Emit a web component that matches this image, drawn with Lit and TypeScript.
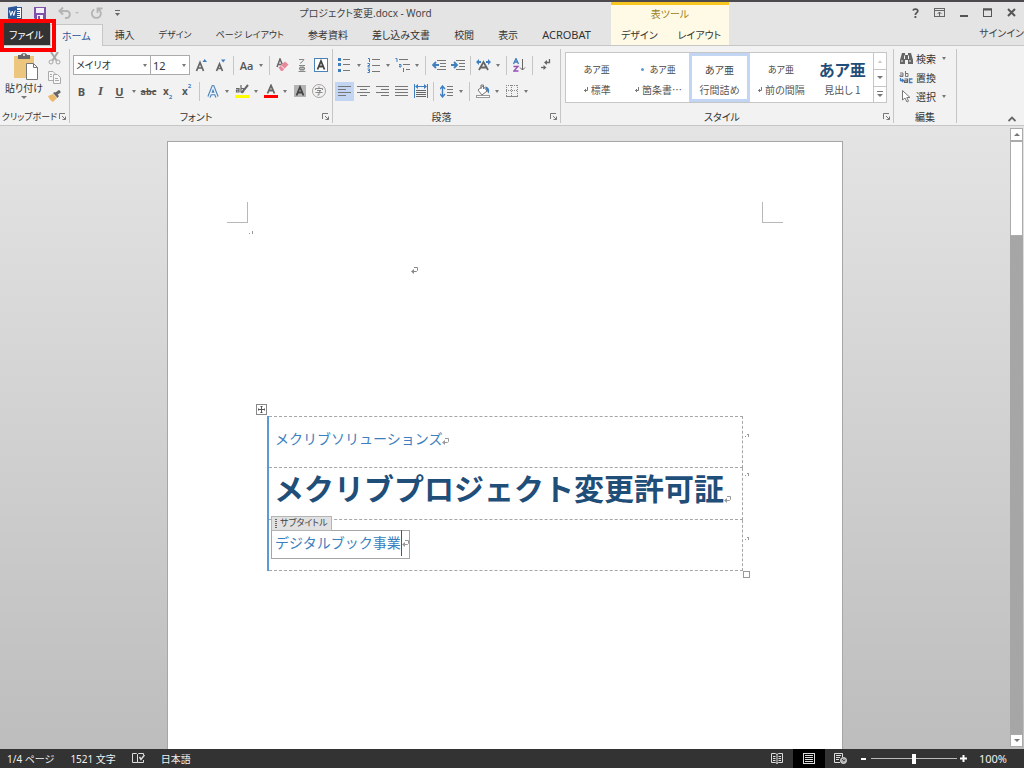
import { LitElement, html, css, svg, TemplateResult } from "lit";
import { customElement, property } from "lit/decorators.js";
import { classMap } from "lit/directives/class-map.js";

const icon = (w: number, h: number, body: unknown) =>
  html`<svg width=${w} height=${h} viewBox="0 0 ${w} ${h}" fill="none" aria-hidden="true">${body}</svg>`;

const lines = (rows: number[][], color = "#777") =>
  rows.map(([x1, x2, y]) => svg`<path d="M${x1} ${y}.5H${x2}" stroke=${color}/>`);

const ret = (color = "#666") => icon(7, 7, svg`<path d="M3 0.500H6.500V3.500L5.500 4.500H2" stroke=${color}/><path d="M0 4.500L3 2V7Z" fill=${color}/>`);

const ICONS: Record<string, () => TemplateResult> = {
  word: () => icon(14, 14, svg`
    <rect x="7.500" y="1.500" width="6" height="11" fill="#fff" stroke="#2b579a"/>
    <path d="M9 4.500H12M9 6.500H12M9 8.500H12M9 10.500H12" stroke="#2b579a"/>
    <path d="M0 1.500L9 0V14L0 12.500Z" fill="#2b579a"/>
    <path d="M1.500 4.500L2.800 9.500L4.300 5L5.800 9.500L7.200 4.500" stroke="#fff"/>`),
  save: () => icon(12, 12, svg`
    <path d="M0 0H12V12H1L0 11Z" fill="#8051a8"/><rect x="2" y="1" width="8" height="5" fill="#f4f0f8"/>
    <rect x="3" y="8" width="6" height="4" fill="#f4f0f8"/><rect x="4" y="9" width="2" height="3" fill="#8051a8"/>`),
  undo: () => icon(13, 12, svg`<path d="M1.500 4H8.500C13 4 13 11 8 11H7M5 0.500L1.500 4L5 7.500" stroke="#b4b4b4" stroke-width="2"/>`),
  redo: () => icon(12, 12, svg`<path d="M7.500 2.500A4.500 4.500 0 1 1 3.200 2.500M6.500 6V1.500H11.500" stroke="#b4b4b4" stroke-width="1.800"/>`),
  more: () => icon(5, 6, svg`<path d="M0 0.500H5" stroke="#666"/><path d="M0 3H5L2.500 6Z" fill="#666"/>`),
  help: () => icon(7, 10, svg`<path d="M1 2.500C1.500 0.500 6 0.500 5.800 3C5.600 4.800 3.400 4.500 3.400 7M3.400 8V10" stroke="#555" stroke-width="1.800"/>`),
  ribbonOpts: () => icon(11, 9, svg`<rect x="0.500" y="0.500" width="10" height="8" stroke="#666"/><path d="M1 2.500H10M5.500 8V4M3.500 6L5.500 4L7.500 6" stroke="#666"/>`),
  min: () => icon(8, 9, svg`<path d="M0 8H8" stroke="#555" stroke-width="2"/>`),
  max: () => icon(9, 9, svg`<rect x="0.500" y="1" width="8" height="7.500" stroke="#555"/><path d="M0 1.500H9" stroke="#555" stroke-width="2"/>`),
  close: () => icon(9, 9, svg`<path d="M1 1L8 8M8 1L1 8" stroke="#555" stroke-width="2"/>`),
  paste: () => icon(26, 27, svg`
    <rect x="1" y="3" width="20" height="22" fill="#ecc67c"/>
    <path d="M5 2H8C8 -0.500 14 -0.500 14 2H17V6H5Z" fill="#666"/><circle cx="11" cy="2" r="1" fill="#f2f2f2"/>
    <path d="M13.500 10.500H20.500L24.500 14.500V26.500H13.500Z" fill="#fff" stroke="#777"/><path d="M20.500 10.500V14.500H24.500" stroke="#777"/>`),
  cut: () => icon(13, 13, svg`<path d="M3 0L8.500 8.500M10 0L4.500 8.500" stroke="#a8a8a8" stroke-width="2"/><circle cx="3" cy="10" r="2" stroke="#a8a8a8"/><circle cx="10" cy="10" r="2" stroke="#a8a8a8"/>`),
  copy: () => icon(13, 13, svg`<path d="M0.500 0.500H5L7.500 3V9.500H0.500Z" fill="#f6f6f6" stroke="#aaa"/><path d="M5.500 3.500H9.500L12.500 6.500V12.500H5.500Z" fill="#f6f6f6" stroke="#aaa"/><path d="M2 3.500H4M2 5.500H4M7 7.500H10M7 9.500H11" stroke="#aaa"/>`),
  brush: () => icon(14, 13, svg`<path d="M0 6L5 4L9 8L5 12C3 11 1 9 0 6Z" fill="#ecb96c"/><path d="M5 3L7 2L11 6L9.500 8Z" fill="#666"/><path d="M8 4L12 1" stroke="#666" stroke-width="3"/>`),
  grow: () => icon(13, 13, svg`<path d="M1.500 12L5 3.500L8.500 12M3 9H7.500" stroke="#666" stroke-width="1.700"/><path d="M7.500 3L9.700 0L12 3Z" fill="#3f7fbf"/>`),
  shrink: () => icon(13, 13, svg`<path d="M2.500 12L5.500 5L8.500 12M3.500 9.500H7.500" stroke="#666" stroke-width="1.700"/><path d="M7 0.500H11.500L9.200 3.500Z" fill="#3f7fbf"/>`),
  erase: () => icon(14, 14, svg`<path d="M1 9L4 1L6.500 7M2 6.500H5" stroke="#666" stroke-width="1.500"/><path d="M2.500 9.500L9 3.500L12.500 6.500L6.500 13H5Z" fill="#e88a9c"/><path d="M5 7.500L8.500 11" stroke="#f5f5f5"/>`),
  ruby: () => icon(8, 13, svg`<path d="M1 0.500H6L4 3L2 4.500M1 6.500H7M1.500 8.500H6.500V10.500H1.500ZM3 6V12M5 6V12M0.500 12.500H7.500" stroke="#888"/>`),
  boxA: () => icon(14, 14, svg`<rect x="0.500" y="0.500" width="13" height="13" fill="#fff" stroke="#4a83b8"/><path d="M3.500 11.500L7 3L10.500 11.500M4.500 8.500H9.500" stroke="#444" stroke-width="1.800"/>`),
  effects: () => icon(12, 13, svg`<path d="M2 12L6 2L10 12M3.500 8.500H8.500" stroke="#4a83b8" stroke-width="3.500"/><path d="M2 12L6 2L10 12M3.500 8.500H8.500" stroke="#eef5fc" stroke-width="1.300"/>`),
  marker: () => icon(14, 14, svg`<path d="M1 4.500H4V8H1.500V6.200H4M6 1V8H8.500V4.500H6" stroke="#666" stroke-width="1.200"/><path d="M13 1L8 7L6.500 9" stroke="#666" stroke-width="2"/><rect y="11" width="14" height="3" fill="#ff0"/>`),
  color: () => icon(14, 14, svg`<path d="M3.500 9.500L7 1.500L10.500 9.500M4.500 6.500H9.500" stroke="#666" stroke-width="1.800"/><rect y="11" width="14" height="3" fill="#f00"/>`),
  shade: () => icon(12, 12, svg`<rect width="12" height="12" fill="#b4b4b4"/><path d="M2.500 10.500L6 2L9.500 10.500M3.500 7.500H8.500" stroke="#444" stroke-width="1.800"/>`),
  enclose: () => icon(14, 14, svg`<circle cx="7" cy="7" r="6.500" stroke="#aaa09c"/><path d="M7 2.500V4M3.500 6V4.500H10.500V6M5 6.500H9L7 8V11H5.500M3.500 8.500H10.500" stroke="#888"/>`),
  bullets: () => icon(13, 14, svg`<path d="M0 1.500H3M0 6.500H3M0 12.500H3" stroke="#3f7fbf" stroke-width="3"/>${lines([[5, 12, 1], [5, 12, 6], [5, 12, 12]])}`),
  numbers: () => icon(13, 15, svg`<path d="M1 0.500H2.500V4M0.500 5.500H2.500V7.500H1V9H3M0.500 11H2.500V14.500H0.500M1 12.500H2" stroke="#3f7fbf"/>${lines([[5, 13, 1], [5, 13, 7], [5, 13, 13]])}`),
  multi: () => icon(15, 14, svg`<path d="M0.500 0.500H2V4M4 6.500H6V9H4.500V7.500M8.500 10V14" stroke="#3f7fbf"/>${lines([[4, 13, 1], [8, 15, 6], [11, 15, 11]])}`),
  outdent: () => icon(14, 10, svg`${lines([[5, 14, 0], [8, 14, 3], [8, 14, 6], [5, 14, 9]])}<path d="M7 5H2M4 2L1 5L4 8" stroke="#3f7fbf" stroke-width="1.800"/>`),
  indent: () => icon(14, 10, svg`${lines([[5, 14, 0], [8, 14, 3], [8, 14, 6], [5, 14, 9]])}<path d="M0 5H5M3 2L6 5L3 8" stroke="#3f7fbf" stroke-width="1.800"/>`),
  scaleA: () => icon(15, 12, svg`<path d="M3 11L7.500 3L12 11M4.500 8.500H10.500" stroke="#666" stroke-width="1.800"/><path d="M0 3L3 0V2H5V4H3V6ZM15 3L12 0V2H10V4H12V6Z" fill="#3f7fbf"/>`),
  sort: () => icon(13, 14, svg`<path d="M0.500 6L3 0.500L5.500 6M1.500 4H4.500" stroke="#3f7fbf" stroke-width="1.300"/><path d="M0.500 8.500H5L0.800 13H5.500" stroke="#9650b4" stroke-width="1.300"/><path d="M9.500 1V12M7 9.500L9.500 12L12 9.500" stroke="#666"/>`),
  marks: () => icon(10, 12, svg`<path d="M8.500 0V3.500H4" stroke="#666" stroke-width="1.300"/><path d="M3 3.500L6 1V6Z" fill="#666"/><path d="M0 8.500H3" stroke="#666" stroke-width="1.300"/><path d="M5.500 8.500L2.500 6V11Z" fill="#666"/>`),
  left: () => icon(13, 10, lines([[0, 13, 0], [0, 8, 3], [0, 13, 6], [0, 8, 9]])),
  center: () => icon(13, 10, lines([[0, 13, 0], [3, 10, 3], [0, 13, 6], [3, 10, 9]])),
  right: () => icon(13, 10, lines([[0, 13, 0], [5, 13, 3], [0, 13, 6], [5, 13, 9]])),
  justify: () => icon(13, 10, lines([[0, 13, 0], [0, 13, 3], [0, 13, 6], [0, 13, 9]])),
  distribute: () => icon(14, 14, svg`<path d="M0.500 0V14M13.500 0V14" stroke="#3f7fbf"/><path d="M1 2.500L4 0V2H10V0L13 2.500L10 5V3H4V5Z" fill="#3f7fbf"/><path d="M2 6.500H12M2 8.500H12M2 10.500H12M2 12.500H12" stroke="#666"/>`),
  spacing: () => icon(13, 13, svg`<path d="M2.500 2V11M0 4L2.500 1L5 4M0 9L2.500 12L5 9" stroke="#3f7fbf" stroke-width="1.400"/>${lines([[7, 13, 1], [7, 13, 4], [7, 13, 7], [7, 13, 10]])}`),
  bucket: () => icon(14, 14, svg`<path d="M2 6L7 2L11 7L6 11Z" fill="#fff" stroke="#777"/><path d="M5 5V1H7.500V5" stroke="#777"/><path d="M9 2.500C13 3 14 6 12.500 9.500L10.500 6Z" fill="#3f7fbf"/><rect x="0.500" y="11.500" width="13" height="2" fill="#fff" stroke="#999"/>`),
  borders: () => icon(12, 12, svg`<path d="M0.500 0V12M11.500 0V12M0 0.500H12M5.500 0V12M0 5.500H12" stroke="#888" stroke-dasharray="1 1"/><path d="M0 11.500H12" stroke="#888"/>`),
  find: () => icon(13, 11, svg`<path d="M2 0H5V2H8V0H11L13 7V11H8V7H5V11H0V7Z" fill="#666"/><path d="M4.500 2.500V6M8.500 2.500V6M2 7V9M10 7V9" stroke="#f2f2f2"/>`),
  replace: () => icon(14, 14, svg`<path d="M1 2H4V5.500H1V4H4M6.500 0V5.500H9V2.500H6.500" stroke="#777"/><path d="M1.500 7V9.500H4M3 8L4.500 9.500L3 11M13.500 8H10.500V11.500H13.500" stroke="#3f7fbf" stroke-width="1.300"/><path d="M5.500 8H8.500V11.500H5.500V9.800H8.500" stroke="#666" stroke-width="1.200"/>`),
  select: () => icon(9, 13, svg`<path d="M0.500 0.500V10L3 8L5 12L6.500 11.200L4.800 7.500H8Z" fill="#fff" stroke="#777"/>`),
  proof: () => icon(13, 11, svg`<path d="M5.500 1.500V9.500H0.500V0.500H4.500L5.500 1.500L6.500 0.500H11.500V2M5.500 9.500H11.500V7" stroke="#ddd"/><path d="M7.500 4L9 6.500L12.500 2" stroke="#ddd" stroke-width="1.500"/>`),
  read: () => icon(12, 11, svg`<path d="M6 1.500V10.500M0.500 0.500H4.500L6 1.500L7.500 0.500H11.500V9.500H7.500L6 10.500L4.500 9.500H0.500Z" stroke="#ddd"/><path d="M2 3.500H4.500M2 5.500H4.500M2 7.500H4.500M7.500 3.500H10M7.500 5.500H10M7.500 7.500H10" stroke="#ddd"/>`),
  print: () => icon(12, 11, svg`<rect x="0.500" y="0.500" width="11" height="10" stroke="#ddd"/><path d="M2 2.500H10M2 4.500H10M2 6.500H10M2 8.500H10" stroke="#ddd"/>`),
  web: () => icon(13, 11, svg`<path d="M6 9.500H0.500V0.500H8.500V4M2 2.500H7M2 4.500H6M2 6.500H5" stroke="#ddd"/><circle cx="9.500" cy="7.500" r="3" fill="#aaa" stroke="#ddd"/><path d="M8 6L10 8L11 6.500" stroke="#444"/>`),
};

@customElement("ribbon-button")
class RibbonButton extends LitElement {
  @property() icon = "";
  @property() label = "";
  @property({ type: Boolean }) drop = false;
  @property({ type: Boolean }) on = false;
  static styles = css`
    :host { display: flex; flex: none; }
    button { all: unset; display: flex; align-items: center; height: 19px; }
    .face { width: 19px; height: 19px; display: flex; align-items: center; justify-content: center; color: #555; font: 11px "Open Sans", sans-serif; }
    .on { background: #c2d5f2; }
    .arrow { width: 10px; display: flex; justify-content: center; }
    .arrow::after { content: ""; border: 2px solid transparent; border-top: 3px solid #777; border-bottom: 0; }
    .b { font-weight: 700; }
    .i { font-style: italic; font-weight: 700; font-family: "Liberation Serif", serif; font-size: 13px; }
    .u { font-weight: 700; text-decoration: underline; }
    .s { font-size: 9px; font-weight: 700; text-decoration: line-through; }
    .case { font-size: 11px; font-weight: 600; }
    .x { font-size: 10px; font-weight: 700; }
    small { font-size: 6px; font-weight: 700; color: #3f7fbf; line-height: 8px; }
    .low { align-self: flex-end; }
    .high { align-self: flex-start; }
  `;
  private face() {
    switch (this.icon) {
      case "B": return html`<span class="b">B</span>`;
      case "I": return html`<span class="i">I</span>`;
      case "U": return html`<span class="u">U</span>`;
      case "abc": return html`<span class="s">abc</span>`;
      case "Aa": return html`<span class="case">Aa</span>`;
      case "sub": return html`<span class="x">x</span><small class="low">2</small>`;
      case "sup": return html`<span class="x">x</span><small class="high">2</small>`;
      default: return ICONS[this.icon]();
    }
  }
  render() {
    return html`<button aria-label=${this.label}>
      <span class=${classMap({ face: true, on: this.on })}>${this.face()}</span>
      ${this.drop ? html`<span class="arrow"></span>` : ""}
    </button>`;
  }
}

@customElement("ribbon-group")
class RibbonGroup extends LitElement {
  @property() label = "";
  @property({ type: Boolean }) launcher = false;
  static styles = css`
    :host { display: flex; flex-direction: column; flex: none; box-sizing: border-box; border-right: 1px solid #c6c6c6; margin: 3px 0; height: 74px; }
    .body { flex: 1; display: flex; }
    .foot { height: 12px; display: flex; align-items: center; }
    .name { flex: 1; text-align: center; line-height: 12px; white-space: nowrap; }
    button { all: unset; width: 10px; height: 8px; display: flex; }
  `;
  render() {
    return html`<div class="body"><slot></slot></div>
      <div class="foot"><span class="name">${this.label}</span>
      ${this.launcher ? html`<button aria-label="${this.label}の設定">${icon(8, 8, svg`<path d="M0.500 6V0.500H6M3 3L6.500 6.500M6.500 3.500V6.500H3.500" stroke="#777"/>`)}</button>` : ""}</div>`;
  }
}

type Tool = [string, string, boolean?, boolean?] | "|";
const FONT_TOP: Tool[] = [["grow", "フォントの拡大"], ["shrink", "フォントの縮小"], "|", ["Aa", "文字種の変換", true], "|", ["erase", "書式のクリア"], ["ruby", "ルビ"], ["boxA", "囲み線"]];
const FONT_LOW: Tool[] = [["B", "太字"], ["I", "斜体"], ["U", "下線", true], ["abc", "取り消し線"], ["sub", "下付き"], ["sup", "上付き"], "|", ["effects", "文字の効果", true], ["marker", "蛍光ペン", true], ["color", "フォントの色", true], ["shade", "網かけ"], ["enclose", "囲い文字"]];
const PARA_TOP: Tool[] = [["bullets", "箇条書き", true], ["numbers", "段落番号", true], ["multi", "アウトライン", true], "|", ["outdent", "インデントを減らす"], ["indent", "インデントを増やす"], "|", ["scaleA", "拡張書式", true], "|", ["sort", "並べ替え"], "|", ["marks", "編集記号"]];
const PARA_LOW: Tool[] = [["left", "左揃え", false, true], ["center", "中央揃え"], ["right", "右揃え"], ["justify", "両端揃え"], ["distribute", "均等割り付け"], "|", ["spacing", "行間", true], "|", ["bucket", "塗りつぶし", true], ["borders", "罫線", true]];

const TABS: [string, string][] = [["挿入", ""], ["デザイン", "kana"], ["ページ レイアウト", "kana"], ["参考資料", ""], ["差し込み文書", ""], ["校閲", ""], ["表示", ""], ["ACROBAT", "latin"]];
const STYLES = [
  { name: "標準", mark: true }, { name: "箇条書…", mark: true, dot: true }, { name: "行間詰め", on: true },
  { name: "前の間隔", mark: true }, { name: "見出し 1", head: true },
];

@customElement("app-root")
class AppRoot extends LitElement {
  static styles = css`
    :host { display: flex; flex-direction: column; height: 100vh; overflow: hidden; font-family: "Noto Sans", "Noto Sans CJK JP", sans-serif; font-size: 10px; color: #333; font-feature-settings: "palt"; }
    * { box-sizing: border-box; }
    button { all: unset; box-sizing: border-box; cursor: default; }
    svg { display: block; flex: none; }
    .header { flex: none; display: grid; grid-template-columns: 611px 118px 1fr; grid-template-rows: 21px 22px; background: #e4e4e4; border-top: 2px solid #4c4a4c; border-bottom: 1px solid #c6c6c6; position: relative; }
    .titlebar { display: flex; align-items: center; padding-left: 8px; }
    .quick { display: flex; align-items: center; gap: 12px; width: 122px; }
    .quick .pair { display: flex; align-items: center; gap: 4px; }
    .tri { border: 3px solid transparent; border-top-color: #777; border-bottom: 0; }
    .tri.pale { border-top-color: #bbb; border-width: 2px; border-bottom: 0; }
    .tri.up { border: 3px solid transparent; border-bottom-color: #777; border-top: 0; }
    .title { flex: 1; text-align: center; font-size: 10px; color: #444; font-weight: 400; margin: 0; padding-right: 10px; }
    .tabs { display: flex; align-items: stretch; grid-row: 2; grid-column: 1; padding-left: 3px; }
    .tab { display: flex; align-items: center; padding: 2px 12px 0; white-space: nowrap; line-height: 12px; }
    .kana { font-size: 9px; }
    .latin { font-size: 11px; }
    .file { background: #333; color: #fff; width: 47px; padding: 2px 6px 0; }
    .home { color: #2b579a; background: #f2f2f2; border: 1px solid #c6c6c6; border-bottom: 0; margin: 1px 0 -1px; padding: 0 11px; }
    .context { grid-row: 1 / 3; grid-column: 2; background: #fffae5; border-top: 3px solid #f8c61e; display: flex; flex-direction: column; }
    .ctitle { flex: 1; display: flex; align-items: center; justify-content: center; color: #a08018; line-height: 12px; }
    .ctabs { display: flex; height: 22px; justify-content: space-between; }
    .ctabs .tab { padding: 2px 10px 0; }
    .window { grid-column: 3; display: flex; justify-content: flex-end; align-items: center; gap: 15px; padding-right: 8px; }
    .signin { grid-column: 3; grid-row: 2; justify-self: end; color: #444; text-decoration: none; line-height: 12px; padding-top: 4px; }
    .callout { position: absolute; left: 0; top: 17px; width: 56px; height: 33px; border: 4px solid #f00; z-index: 2; pointer-events: none; }

    .ribbon { flex: none; display: flex; height: 80px; background: #f2f2f2; border-bottom: 1px solid #c6c6c6; }
    .clip { width: 70px; font-size: 9px; }
    .font { width: 263px; }
    .para { width: 228px; }
    .styles { width: 333px; }
    .edit { width: 63px; }
    .paste { width: 38px; margin-left: 5px; display: flex; flex-direction: column; align-items: center; gap: 2px; padding-top: 4px; white-space: nowrap; font-size: 10px; }
    .paste span { line-height: 12px; }
    .paste svg { margin-left: 4px; }
    .side { display: flex; flex-direction: column; gap: 6px; padding: 3px 0 0 5px; }
    .rows { display: flex; flex-direction: column; gap: 6px; padding: 6px 0 0 2px; }
    .row { display: flex; align-items: center; height: 20px; }
    .sep { flex: none; width: 7px; height: 19px; display: flex; justify-content: center; }
    .sep::after { content: ""; width: 1px; background: #c6c6c6; }
    .combos { display: flex; padding: 0 2px 0 1px; }
    .combo { appearance: none; font: inherit; font-size: 10px; color: #333; height: 20px; width: 78px; padding: 0 2px; border: 1px solid #ababab; border-radius: 0; background: #fff; }
    .wrap { position: relative; display: flex; }
    .wrap .tri { position: absolute; right: 4px; top: 9px; border-width: 3px 2px 0; }
    .size { margin-left: -1px; width: 40px; font-size: 11px; }
    .gallery { display: flex; margin: 3px 0 0 4px; width: 322px; height: 51px; background: #fff; border: 1px solid #c6c6c6; }
    .style { flex: 1; min-width: 0; display: flex; flex-direction: column; align-items: center; justify-content: center; gap: 8px; border: 3px solid transparent; white-space: nowrap; color: #444; padding-top: 4px; }
    .style > span { line-height: 12px; display: flex; align-items: center; gap: 3px; }
    .chosen { border-color: #c2d5f2; }
    .sample { font-size: 9px; }
    .chosen .sample { font-size: 10px; }
    .style > .big { font-size: 16px; font-weight: 700; color: #1f4e79; }
    .dot { width: 3px; height: 3px; border-radius: 50%; background: #5b9bd5; margin-right: 3px; }
    .caption { color: #555; font-family: "Noto Sans CJK JP", sans-serif; }
    .spin { width: 13px; display: grid; grid-template-rows: repeat(3, 1fr); border-left: 1px solid #c6c6c6; }
    .spin button { display: flex; flex-direction: column; gap: 2px; align-items: center; justify-content: center; }
    .spin button + button { border-top: 1px solid #c6c6c6; }
    .spin .tri.up { border-bottom-color: #ccc; border-width: 0 2px 3px; }
    .spin .bar { width: 6px; height: 1px; background: #777; }
    .finds { display: flex; flex-direction: column; padding: 0 0 0 5px; }
    .finds button { display: flex; align-items: center; height: 19px; gap: 3px; white-space: nowrap; }
    .finds .pic { width: 14px; display: flex; justify-content: center; }
    .finds .tri { margin-left: 3px; border-width: 3px 2px 0; }
    .collapse { margin: auto 8px 3px auto; }

    .work { flex: 1; min-height: 0; display: flex; background: linear-gradient(#e4e4e4, #bdbdbd); }
    .canvas { flex: 1; overflow: hidden; padding-top: 15px; }
    .page { width: 676px; height: 956px; margin: 0 auto; background: #fff; border: 1px solid #a6a6a6; padding: 60px 59px; }
    .corners { display: flex; justify-content: space-between; }
    .corners i { width: 21px; height: 21px; border: 1px solid #b8b8b8; border-top: 0; border-left: 0; }
    .corners i + i { border-right: 0; border-left: 1px solid #b8b8b8; }
    .sheet { padding: 0 20px; }
    .tiny { height: 14px; padding: 8px 0 0 2px; }
    .enter { height: 179px; padding: 30px 0 0 164px; }
    .block { position: relative; width: 476px; margin-left: 20px; }
    .doc { width: 100%; border-collapse: collapse; border-left: 2px solid #5b9bd5; font-feature-settings: normal; }
    .doc td { padding: 0 0 0 6px; border: 1px dashed #a6a6a6; border-left: 0; height: 51px; color: #3b7fc0; font-size: 14px; white-space: nowrap; vertical-align: middle; }
    .doc .main { font-size: 30px; font-weight: 700; color: #1f4e79; padding-bottom: 10px; height: 52px; }
    .line { display: flex; align-items: flex-end; line-height: 20px; }
    .line svg { margin-bottom: 4px; }
    .main .line { line-height: 36px; margin-left: -1px; }
    .doc .first { padding-bottom: 6px; }
    .ctl { position: relative; display: flex; align-items: center; width: 139px; height: 29px; margin: 0 0 2px -4px; border: 1px solid #a6a6a6; padding: 0 0 2px 3px; line-height: 20px; }
    .caret { width: 1px; height: 26px; background: #555; }
    .tag { position: absolute; left: -1px; top: -15px; height: 15px; display: flex; align-items: center; gap: 2px; padding: 0 3px; border: 1px solid #b4b4b4; background: #e1e1e1; color: #444; font-size: 9px; line-height: 12px; font-feature-settings: "palt"; }
    .move { position: absolute; left: -11px; top: -12px; }
    .size-handle { position: absolute; right: -7px; bottom: -7px; width: 7px; height: 7px; border: 1px solid #999; background: #fff; }
    .ends { position: absolute; left: 100%; top: 0; bottom: 0; padding: 17px 0 28px 2px; display: grid; grid-template-rows: 39px 64px auto; }
    .scroll { width: 14px; display: flex; flex-direction: column; padding: 2px 1px 2px 0; }
    .scroll button { height: 13px; background: #fff; border: 1px solid #ababab; display: flex; align-items: center; justify-content: center; }
    .track { flex: 1; background: #a6a6a6; }
    .thumb { height: 16%; background: #fff; border: 1px solid #ababab; }

    .status { flex: none; height: 19px; background: #333; color: #f0f0f0; display: flex; align-items: center; font-size: 11px; line-height: 14px; padding: 0 17px 0 7px; }
    .info { display: flex; align-items: center; gap: 16px; font-size: 10px; }
    .views { margin-left: auto; display: flex; align-self: stretch; }
    .views button { width: 32px; display: flex; align-items: center; justify-content: center; }
    .views .active { background: #000; }
    .zoom { display: flex; align-items: center; gap: 3px; padding-left: 4px; }
    .zoom button { width: 7px; height: 12px; display: flex; align-items: center; }
    input { appearance: none; margin: 0; width: 86px; height: 12px; background: linear-gradient(#bbb, #bbb) no-repeat center / 100% 1px; }
    input::-webkit-slider-thumb { appearance: none; width: 4px; height: 10px; background: #fff; }
    .percent { padding-left: 9px; }
  `;

  private tools(list: Tool[]) {
    return list.map((t) => t === "|"
      ? html`<span class="sep"></span>`
      : html`<ribbon-button icon=${t[0]} label=${t[1]} ?drop=${t[2]} ?on=${t[3]}></ribbon-button>`);
  }

  private header() {
    return html`<header class="header">
      <div class="titlebar">
        <div class="quick">
          <span>${ICONS.word()}</span>
          <button aria-label="上書き保存">${ICONS.save()}</button>
          <div class="pair"><button aria-label="元に戻す">${ICONS.undo()}</button><span class="tri pale"></span></div>
          <button aria-label="やり直し">${ICONS.redo()}</button>
          <button aria-label="カスタマイズ">${ICONS.more()}</button>
        </div>
        <h1 class="title">プロジェクト変更.docx - Word</h1>
      </div>
      <nav class="tabs">
        <button class="tab file">ファイル</button>
        <button class="tab home">ホーム</button>
        ${TABS.map(([t, kind]) => html`<button class="tab ${kind}">${t}</button>`)}
      </nav>
      <div class="context">
        <div class="ctitle">表ツール</div>
        <div class="ctabs"><button class="tab">デザイン</button><button class="tab">レイアウト</button></div>
      </div>
      <div class="window">
        ${[["help", "ヘルプ"], ["ribbonOpts", "リボンの表示オプション"], ["min", "最小化"], ["max", "最大化"], ["close", "閉じる"]].map(
          ([i, l]) => html`<button aria-label=${l}>${ICONS[i]()}</button>`)}
      </div>
      <a class="signin" href="#">サインイン</a>
      <div class="callout"></div>
    </header>`;
  }

  private ribbon() {
    return html`<div class="ribbon">
      <ribbon-group class="clip" label="クリップボード" launcher>
        <button class="paste">${ICONS.paste()}<span>貼り付け</span><i class="tri"></i></button>
        <div class="side">
          <button aria-label="切り取り">${ICONS.cut()}</button>
          <button aria-label="コピー">${ICONS.copy()}</button>
          <button aria-label="書式のコピー">${ICONS.brush()}</button>
        </div>
      </ribbon-group>
      <ribbon-group class="font" label="フォント" launcher>
        <div class="rows">
          <div class="row">
            <div class="combos">
              <span class="wrap"><select class="combo" aria-label="フォント"><option>メイリオ</option></select><i class="tri"></i></span>
              <span class="wrap"><select class="combo size" aria-label="フォント サイズ"><option>12</option></select><i class="tri"></i></span>
            </div>
            ${this.tools(FONT_TOP)}
          </div>
          <div class="row">${this.tools(FONT_LOW)}</div>
        </div>
      </ribbon-group>
      <ribbon-group class="para" label="段落" launcher>
        <div class="rows"><div class="row">${this.tools(PARA_TOP)}</div><div class="row">${this.tools(PARA_LOW)}</div></div>
      </ribbon-group>
      <ribbon-group class="styles" label="スタイル" launcher>
        <div class="gallery">
          ${STYLES.map((s) => html`<button class=${classMap({ style: true, chosen: !!s.on })}>
            <span class=${s.head ? "big" : "sample"}>${s.dot ? html`<i class="dot"></i>` : ""}あア亜</span>
            <span class="caption">${s.mark ? icon(5, 5, svg`<path d="M4.500 0V3.500H1M2.500 2V5" stroke="#777"/>`) : ""}${s.name}</span>
          </button>`)}
          <div class="spin">
            <button aria-label="前へ"><i class="tri up"></i></button>
            <button aria-label="次へ"><i class="tri"></i></button>
            <button aria-label="その他"><i class="bar"></i><i class="tri"></i></button>
          </div>
        </div>
      </ribbon-group>
      <ribbon-group class="edit" label="編集">
        <div class="finds">
          <button><span class="pic">${ICONS.find()}</span>検索<i class="tri"></i></button>
          <button><span class="pic">${ICONS.replace()}</span>置換</button>
          <button><span class="pic">${ICONS.select()}</span>選択<i class="tri"></i></button>
        </div>
      </ribbon-group>
      <button class="collapse" aria-label="リボンを折りたたむ">${icon(8, 6, svg`<path d="M0.500 5L4 1.500L7.500 5" stroke="#666" stroke-width="1.800"/>`)}</button>
    </div>`;
  }

  private end() {
    return icon(5, 5, svg`<path d="M0 3.500H1M2 1.500H4M3.500 1V4" stroke="#999"/>`);
  }

  private document() {
    return html`<div class="work">
      <main class="canvas">
        <article class="page">
          <div class="corners"><i></i><i></i></div>
          <div class="sheet">
            <div class="tiny">${icon(5, 4, svg`<path d="M0 2.500H1M3.500 0V3" stroke="#999"/>`)}</div>
            <div class="enter">${ret("#888")}</div>
            <div class="block">
              <table class="doc">
                <tr><td class="first"><div class="line">メクリブソリューションズ${ret("#999")}</div></td></tr>
                <tr><td class="main"><div class="line">メクリブプロジェクト変更許可証${ret("#999")}</div></td></tr>
                <tr><td><div class="ctl">デジタルブック事業<span class="caret"></span>${ret("#999")}
                  <span class="tag">${icon(3, 9, svg`<path d="M1 0V9" stroke="#666" stroke-width="2" stroke-dasharray="1 1"/>`)}サブタイトル</span></div></td></tr>
              </table>
              <span class="move">${icon(11, 11, svg`<rect x="0.500" y="0.500" width="10" height="10" fill="#fff" stroke="#888"/><path d="M5.500 2V9M2 5.500H9M4.500 2.500H6.500M4.500 8.500H6.500M2.500 4.500V6.500M8.500 4.500V6.500" stroke="#555"/>`)}</span>
              <span class="ends"><i>${this.end()}</i><i>${this.end()}</i><i>${this.end()}</i></span>
              <span class="size-handle"></span>
            </div>
          </div>
        </article>
      </main>
      <div class="scroll">
        <button aria-label="上へ"><i class="tri up"></i></button>
        <div class="track"><div class="thumb"></div></div>
        <button aria-label="下へ"><i class="tri"></i></button>
      </div>
    </div>`;
  }

  render() {
    return html`${this.header()}${this.ribbon()}${this.document()}
      <footer class="status">
        <div class="info"><span>1/4 ページ</span><span>1521 文字</span>${ICONS.proof()}<span>日本語</span></div>
        <div class="views">
          <button aria-label="閲覧モード">${ICONS.read()}</button>
          <button class="active" aria-label="印刷レイアウト">${ICONS.print()}</button>
          <button aria-label="Web レイアウト">${ICONS.web()}</button>
        </div>
        <div class="zoom">
          <button aria-label="縮小">${icon(5, 2, svg`<path d="M0 1H5" stroke="#fff" stroke-width="2"/>`)}</button>
          <input type="range" min="0" max="100" value="50" aria-label="ズーム" />
          <button aria-label="拡大">${icon(7, 7, svg`<path d="M0 3.500H7M3.500 0V7" stroke="#fff" stroke-width="2"/>`)}</button>
          <span class="percent">100%</span>
        </div>
      </footer>`;
  }
}
